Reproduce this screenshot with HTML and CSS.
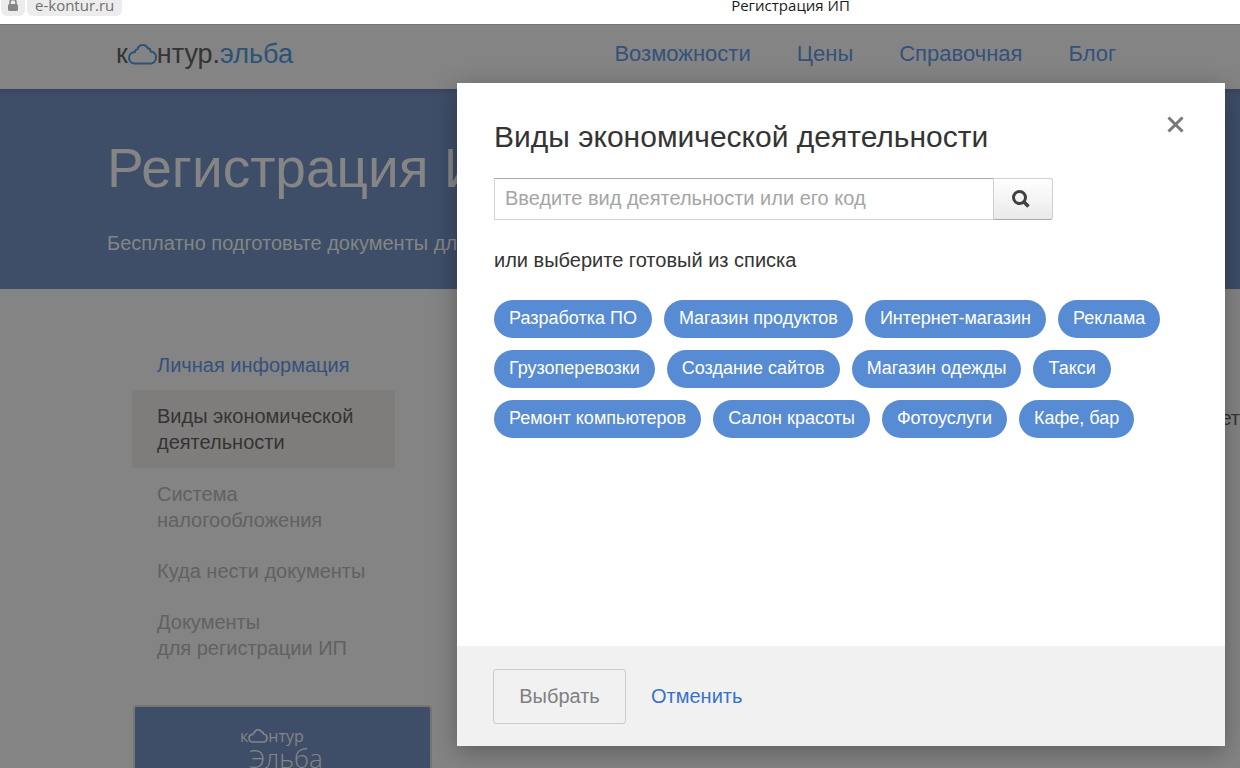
FILE: index.html
```html
<!DOCTYPE html>
<html lang="ru">
<head>
<meta charset="utf-8">
<title>Регистрация ИП</title>
<link rel="stylesheet" href="styles.css">
</head>
<body>
<div class="browser-bar">
  <div class="address">
    <span class="lock"><svg width="12" height="16" viewBox="0 0 12 16" aria-hidden="true"><path d="M3 8V4.500a3 3 0 0 1 6 0V8" fill="none" stroke="#858585" stroke-width="1.500"/><rect x="1" y="6" width="10" height="7" rx="1.500" fill="#858585"/></svg></span>
    <span class="host">e-kontur.ru</span>
  </div>
  <span class="page-title">Регистрация ИП</span>
</div>
<header class="header">
  <a class="logo" href="#"><span>к</span><svg class="logo-cloud" width="29" height="21" viewBox="0 0 29 21" aria-hidden="true"><path d="M6.500 19.500C3.500 19.500 1 17 1 13.800C1 10.500 3.500 8.200 6.800 8C7 6.500 8 5.500 9.500 5C10.500 2.300 12 1 14.500 1C17 1 19 2.300 19.800 4.300C21.500 4.300 22.500 5.500 22.700 7.500C26 8 28 10.500 28 13.500C28 17 25.500 19.500 22.500 19.500Z" fill="none" stroke="currentColor" stroke-width="2"/></svg><span>нтур.</span><span class="logo-product">эльба</span></a>
  <nav class="nav">
    <a href="#">Возможности</a>
    <a href="#">Цены</a>
    <a href="#">Справочная</a>
    <a href="#">Блог</a>
  </nav>
</header>
<section class="hero">
  <h1>Регистрация ИП</h1>
  <p>Бесплатно подготовьте документы для</p>
</section>
<main class="content">
  <aside class="sidebar">
    <ul class="steps">
      <li class="step"><a href="#">Личная информация</a></li>
      <li class="step step-current">Виды экономической деятельности</li>
      <li class="step">Система<br>налогообложения</li>
      <li class="step">Куда нести документы</li>
      <li class="step">Документы<br>для регистрации ИП</li>
    </ul>
    <div class="promo">
      <div class="promo-brand"><span>к</span><svg width="20" height="14" viewBox="0 0 29 21" aria-hidden="true"><path d="M6.500 19.500C3.500 19.500 1 17 1 13.800C1 10.500 3.500 8.200 6.800 8C7 6.500 8 5.500 9.500 5C10.500 2.300 12 1 14.500 1C17 1 19 2.300 19.800 4.300C21.500 4.300 22.500 5.500 22.700 7.500C26 8 28 10.500 28 13.500C28 17 25.500 19.500 22.500 19.500Z" fill="none" stroke="currentColor" stroke-width="2.500"/></svg><span>нтур</span></div>
      <div class="promo-product">Эльба</div>
    </div>
  </aside>
  <p class="note">ет</p>
</main>
<div class="dialog" role="dialog" aria-labelledby="dialog-title">
  <div class="dialog-body">
    <div class="dialog-head">
      <h2 id="dialog-title">Виды экономической деятельности</h2>
      <button class="close" type="button" aria-label="Закрыть"><svg width="17" height="17" viewBox="0 0 17 17" aria-hidden="true"><path d="M1.500 1.500L15.500 15.500M15.500 1.500L1.500 15.500" stroke="#777" stroke-width="3" fill="none"/></svg></button>
    </div>
    <form class="search">
      <input type="text" aria-label="Вид деятельности" placeholder="Введите вид деятельности или его код">
      <button type="button" aria-label="Найти"><svg width="18" height="18" viewBox="0 0 18 18" aria-hidden="true"><circle cx="7.500" cy="7.500" r="6" fill="none" stroke="#404040" stroke-width="3"/><path d="M11.500 11.500L16.500 16.500" stroke="#404040" stroke-width="3.500"/></svg></button>
    </form>
    <p class="hint">или выберите готовый из списка</p>
    <div class="tags">
      <div class="tag-row"><button type="button">Разработка ПО</button><button type="button">Магазин продуктов</button><button type="button">Интернет-магазин</button><button type="button">Реклама</button></div>
      <div class="tag-row"><button type="button">Грузоперевозки</button><button type="button">Создание сайтов</button><button type="button">Магазин одежды</button><button type="button">Такси</button></div>
      <div class="tag-row"><button type="button">Ремонт компьютеров</button><button type="button">Салон красоты</button><button type="button">Фотоуслуги</button><button type="button">Кафе, бар</button></div>
    </div>
  </div>
  <div class="dialog-footer">
    <button class="choose" type="button" disabled>Выбрать</button>
    <a class="cancel" href="#">Отменить</a>
  </div>
</div>
</body>
</html>
```
FILE: styles.css
```css
* { box-sizing: border-box; }
body {
  margin: 0;
  height: 100vh;
  overflow: hidden;
  display: flex;
  flex-direction: column;
  background: #848484;
  color: #343434;
  font: 20px/26px "Liberation Sans", Arial, sans-serif;
}
a { text-decoration: none; color: #34517c; }
h1, h2, p, ul { margin: 0; padding: 0; font-weight: 400; }
button { font: inherit; cursor: pointer; }

.browser-bar {
  flex: none;
  height: 24px;
  display: grid;
  grid-template-columns: 1fr auto 1fr;
  grid-template-rows: 16px;
  align-items: end;
  background: #fff;
  font: 15px/22px "Open Sans", sans-serif;
}
.address { display: flex; gap: 2px; color: #707070; }
.lock, .host { height: 22px; background: #ececec; border-radius: 6px; }
.lock { width: 24px; margin-left: 1px; padding: 3px 6px 0; }
.host { padding: 0 8px; }
.page-title { margin-left: 341px; color: #1a1a1a; }

.header {
  flex: none;
  height: 65px;
  display: flex;
  align-items: center;
  justify-content: space-between;
  padding: 0 124px 6px 116px;
  border-top: 1px solid #757575;
}
.logo { display: flex; align-items: center; color: #343434; font-size: 27px; line-height: 32px; }
.logo-cloud, .logo-product { color: #2b5277; }
.nav { display: flex; gap: 46px; font-size: 22px; line-height: 32px; }

.hero {
  flex: none;
  height: 200px;
  padding: 47px 107px 0;
  background: linear-gradient(#384760, #3e4e69 8px);
  color: #858585;
}
.hero h1 { font-size: 55px; line-height: 64px; }
.hero p { margin-top: 30px; }

.content { flex: 1; min-height: 0; display: flex; justify-content: space-between; padding-left: 132px; }
.sidebar { display: flex; flex-direction: column; width: 300px; padding-top: 50px; }
.steps { list-style: none; width: 263px; color: #616161; }
.step { padding: 13px 25px 12px; }
.step-current { background: #7f7d7b; color: #343434; padding: 13px 25px; }
.promo {
  flex: 1;
  min-height: 0;
  overflow: hidden;
  margin: 32px 0 0 1px;
  padding: 20px 0 0 105px;
  border: 2px solid #757575;
  border-bottom: 0;
  border-radius: 4px 4px 0 0;
  background: #3e4e69;
  color: #858585;
}
.promo-brand { display: flex; align-items: center; font: 16px/18px "Open Sans", sans-serif; }
.promo-product { margin-left: 9px; font: 300 26px/26px "Open Sans", sans-serif; }
.note { padding-top: 116px; }

.dialog {
  position: absolute;
  top: 83px;
  right: 15px;
  width: 768px;
  background: #fff;
  box-shadow: 0 6px 24px rgba(0, 0, 0, .3);
}
.dialog-body { min-height: 563px; padding: 36px 37px; }
.dialog-head { display: flex; justify-content: space-between; align-items: flex-start; }
.dialog-head h2 { font-size: 30px; line-height: 36px; }
.close { display: flex; margin-right: 4px; margin-top: -3px; padding: 0; border: 0; background: none; }
.search { display: flex; width: 559px; height: 42px; margin-top: 23px; }
.search input {
  flex: 1;
  padding: 0 10px 2px;
  border: 1px solid #d4d4d4;
  border-top-color: #aaa;
  border-right: 0;
  background: #fff;
  font: inherit;
}
.search input::placeholder { color: #a5a5a5; }
.search button {
  width: 60px;
  padding: 4px 4px 0 0;
  border: 1px solid #d0d0d0;
  border-bottom-color: #aaa;
  border-radius: 0 3px 3px 0;
  background: linear-gradient(#fff, #e9e9e9);
}
.hint { margin-top: 27px; }
.tags { display: flex; flex-direction: column; gap: 12px; margin-top: 27px; }
.tag-row { display: flex; gap: 12px; }
.tag-row button {
  height: 38px;
  padding: 0 15px 2px;
  border: 0;
  border-radius: 19px;
  background: #578bd4;
  color: #fff;
  font-size: 18px;
}
.dialog-footer { height: 100px; display: flex; align-items: center; gap: 25px; padding: 0 36px; background: #f1f1f1; }
.choose {
  width: 133px;
  height: 55px;
  border: 1px solid #ccc;
  border-radius: 3px;
  background: none;
  color: #808080;
}
.cancel { color: #3672cc; }
```
